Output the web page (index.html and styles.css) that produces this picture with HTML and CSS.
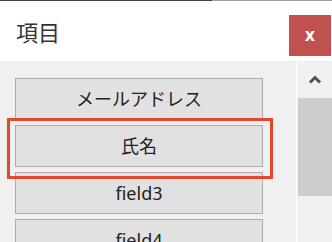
FILE: index.html
```html
<!DOCTYPE html>
<html lang="ja">
<head>
    <meta charset="UTF-8">
    <title>項目</title>
    <link rel="stylesheet" href="styles.css">
</head>
<body>
    <div class="topLine"></div>

    <div class="header">
        <div class="title">項目</div>
        <div class="closeButton">x</div>
    </div>

    <div class="content">
        <div class="fieldList">
            <div class="fieldButton">メールアドレス</div>
            <div class="fieldButton">氏名</div>
            <div class="fieldButton">field3</div>
            <div class="fieldButton">field4</div>
            <div class="selection"></div>
        </div>

        <div class="scrollBar">
            <div class="scrollArrow">
                <svg width="14" height="9" viewBox="0 0 14 9">
                    <polyline points="2,7.5 7,2.5 12,7.5" fill="none" stroke="#505050" stroke-width="3"/>
                </svg>
            </div>
            <div class="scrollThumb"></div>
        </div>
    </div>
</body>
</html>
```

FILE: styles.css
```css
body {
    margin: 0;
    padding: 0;
    width: 332px;
    height: 242px;
    overflow: hidden;
    background-color: #FFFFFF;
    font-family: "Noto Sans", "Noto Sans CJK JP", sans-serif;
    color: #222222;
}

.topLine {
    height: 1px;
    background: linear-gradient(to right, #3C423C 0, #3C423C 212px, #9A9E9A 212px);
}

.header {
    display: flex;
    justify-content: space-between;
    height: 60px;
    background-color: #FFFFFF;
}

.title {
    padding-left: 16px;
    padding-top: 15px;
    font-size: 22px;
    line-height: 30px;
    color: #333333;
    font-family: "Noto Sans CJK JP", sans-serif;
}

.closeButton {
    width: 42px;
    height: 41px;
    margin-top: 14px;
    margin-right: 1px;
    background-color: #C0514E;
    color: #FFFFFF;
    font-weight: bold;
    font-size: 17px;
    line-height: 39px;
    text-align: center;
}

.content {
    display: flex;
    height: 181px;
    overflow: hidden;
    background-color: #F0F0F0;
}

.fieldList {
    position: relative;
    flex: 1;
    display: flex;
    flex-direction: column;
    gap: 5px;
    padding: 17px 33px 0 15px;
}

.fieldButton {
    flex: none;
    height: 40px;
    border: 1px solid #ADADAD;
    background-color: #E1E1E1;
    font-size: 18px;
    line-height: 40px;
    text-align: center;
}

/* marco vermelho em volta do item escolhido */
.selection {
    position: absolute;
    left: 7px;
    top: 57px;
    width: 260px;
    height: 55px;
    border: 3px solid #E3482F;
}

.scrollBar {
    width: 35px;
    border-left: 1px solid #FFFFFF;
    display: flex;
    flex-direction: column;
    align-items: flex-end;
}

.scrollArrow {
    width: 35px;
    height: 37px;
    display: flex;
    align-items: center;
    justify-content: center;
}

.scrollThumb {
    width: 34px;
    height: 98px;
    background-color: #CDCDCD;
}
```
